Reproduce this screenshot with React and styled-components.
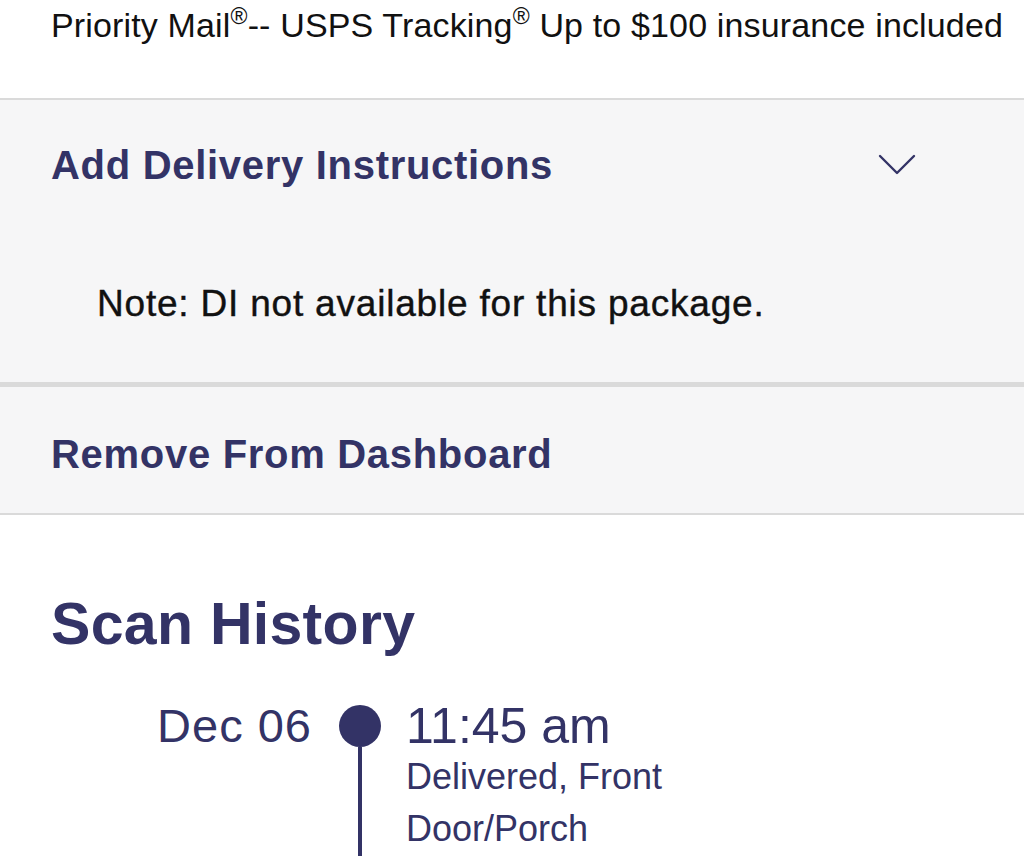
import styled, { createGlobalStyle } from "styled-components";

const GlobalStyle = createGlobalStyle`
    body {
        margin: 0;
        background: #ffffff;
        font-family: "Liberation Sans", Arial, sans-serif;
    }
`

const navy = "#333366";

function Chevron() {
    return (
        <svg width="38" height="24" viewBox="0 0 38 24" fill="none">
            <path d="M2 3 L19 20 L36 3" stroke={navy} strokeWidth="2.4" strokeLinecap="round" strokeLinejoin="round" />
        </svg>
    )
}

function App() {
    return (
        <Page>
            <GlobalStyle />
            <Service>
                Priority Mail<sup>®</sup>-- USPS Tracking<sup>®</sup> Up to $100 insurance included
            </Service>

            <Panel $border="2px">
                <AccordionHead>
                    <SectionTitle>Add Delivery Instructions</SectionTitle>
                    <Chevron />
                </AccordionHead>
                <Note>Note: DI not available for this package.</Note>
            </Panel>

            <Panel $border="5px" $bottom>
                <ActionRow>
                    <SectionTitle>Remove From Dashboard</SectionTitle>
                </ActionRow>
            </Panel>

            <History>
                <HistoryTitle>Scan History</HistoryTitle>
                <Timeline>
                    <DateCol>Dec 06</DateCol>
                    <Track>
                        <Dot />
                        <Line />
                    </Track>
                    <Event>
                        <Time>11:45 am</Time>
                        <Status>Delivered, Front<br />Door/Porch</Status>
                    </Event>
                </Timeline>
            </History>
        </Page>
    )
}

const Page = styled.div`
    width: 1024px;
    height: 856px;
    overflow: hidden;
`

const Service = styled.div`
    height: 98px;
    box-sizing: border-box;
    padding: 5px 0 0 51px;
    font-size: 34px;
    line-height: 40px;
    color: #111111;
    letter-spacing: 0.15px;
    white-space: nowrap;

    sup {
        font-size: 23px;
        line-height: 0;
        vertical-align: 13px;
    }
`

const Panel = styled.section`
    background: #f6f6f7;
    border-top: ${p => p.$border} solid #dadada;
    border-bottom: ${p => (p.$bottom ? "2px solid #dadada" : "none")};
`

const AccordionHead = styled.div`
    height: 130px;
    display: flex;
    align-items: center;
    justify-content: space-between;
    padding: 0 108px 0 51px;
`

const SectionTitle = styled.h2`
    margin: 0;
    font-size: 40px;
    font-weight: 700;
    color: ${navy};
    letter-spacing: 0.7px;
`

const Note = styled.p`
    margin: 0;
    height: 152px;
    box-sizing: border-box;
    padding: 54px 0 0 97px;
    font-size: 37px;
    line-height: 40px;
    color: #111111;
    letter-spacing: 0.8px;
    -webkit-text-stroke: 0.4px #111111;
`

const ActionRow = styled.div`
    height: 126px;
    display: flex;
    align-items: center;
    padding: 8px 0 0 51px;
    box-sizing: border-box;
`

const History = styled.div`
    padding: 0 0 0 51px;
`

const HistoryTitle = styled.h1`
    margin: 0;
    padding-top: 79px;
    font-size: 59px;
    line-height: 60px;
    font-weight: 700;
    color: ${navy};
    letter-spacing: 0.3px;
`

const Timeline = styled.div`
    display: grid;
    grid-template-columns: 288px 42px auto;
    margin-top: 47px;
`

const DateCol = styled.div`
    padding: 0 27px 0 0;
    text-align: right;
    font-size: 47px;
    line-height: 50px;
    color: ${navy};
    letter-spacing: 1px;
`

const Track = styled.div`
    display: flex;
    flex-direction: column;
    align-items: center;
    height: 200px;
`

const Dot = styled.div`
    width: 42px;
    height: 42px;
    margin-top: 4px;
    flex: none;
    border-radius: 50%;
    background: ${navy};
`

const Line = styled.div`
    width: 4px;
    flex: 1;
    background: ${navy};
`

const Event = styled.div`
    padding-left: 25px;
    color: ${navy};
`

const Time = styled.div`
    font-size: 50px;
    line-height: 50px;
`

const Status = styled.div`
    font-size: 36px;
    line-height: 52px;
`

export default App
